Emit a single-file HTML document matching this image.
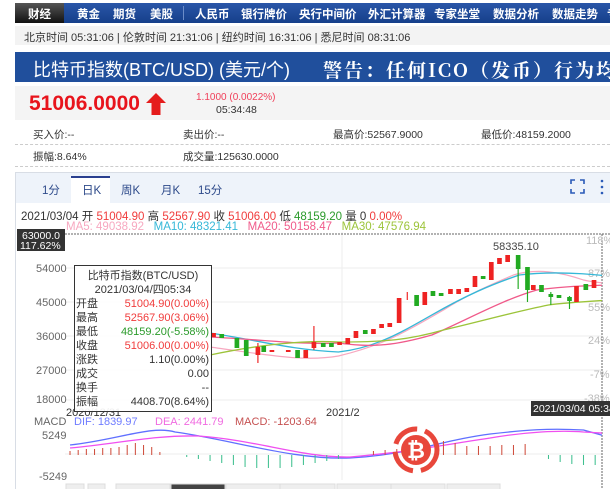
<!DOCTYPE html>
<html><head><meta charset="utf-8"><style>
*{margin:0;padding:0;box-sizing:border-box}
body{width:610px;height:489px;overflow:hidden;background:#fff;font-family:"Liberation Sans","Noto Sans CJK SC",sans-serif;position:relative}
.a{position:absolute;white-space:nowrap}
.nav{left:15px;top:3px;width:595px;height:20px;background:linear-gradient(#2a56a8,#153f8a);color:#fff;font-size:11.5px;font-weight:bold}
.nav span{position:absolute;top:3px}
.t{font-size:11px;color:#333}
</style></head><body>
<div class="a nav">
<div class="a" style="left:0;top:0;width:49px;height:20px;background:linear-gradient(#555,#111)"></div>
<span style="left:13px">财经</span><span style="left:62px">黄金</span><span style="left:98px">期货</span><span style="left:135px">美股</span>
<div class="a" style="left:168px;top:3px;width:1px;height:14px;background:#6b8cc8"></div>
<span style="left:180px">人民币</span><span style="left:226px">银行牌价</span><span style="left:284px">央行中间价</span><span style="left:353px">外汇计算器</span><span style="left:419px">专家坐堂</span><span style="left:478px">数据分析</span><span style="left:537px">数据走势</span><span style="left:592px">专</span>
</div>
<div class="a" style="left:15px;top:26px;width:595px;height:19px;background:#f3f3f3"></div>
<div class="a t" style="left:24px;top:29px;font-size:11px">北京时间 05:31:06 | 伦敦时间 21:31:06 | 纽约时间 16:31:06 | 悉尼时间 08:31:06</div>
<div class="a" style="left:15px;top:52px;width:595px;height:30px;background:#204f9c"></div>
<div class="a" style="left:33px;top:56px;color:#fff;font-size:18px">比特币指数(BTC/USD) (美元/个)</div>
<div class="a" style="left:323px;top:56px;color:#fff;font-size:19px;font-weight:bold;letter-spacing:2px;font-family:'Noto Serif CJK SC',serif">警告：任何ICO（发币）行为均</div>
<div class="a" style="left:15px;top:86px;width:595px;height:34px;background:#f4f4f4"></div>
<div class="a" style="left:29px;top:92px;color:#e8141c;font-size:21px;font-weight:bold">51006.0000</div>
<svg class="a" style="left:145px;top:92px" width="22" height="24"><path d="M11 1 L21 11 L15.5 11 L15.5 23 L6.5 23 L6.5 11 L1 11Z" fill="#e51c1c"/></svg>
<div class="a" style="left:196px;top:92px;color:#f0405a;font-size:10px">1.1000 (0.0022%)</div>
<div class="a t" style="left:216px;top:104px;font-size:10.5px">05:34:48</div>
<div class="a t" style="left:33px;top:127px;font-size:10.5px">买入价:--</div>
<div class="a t" style="left:183px;top:127px;font-size:10.5px">卖出价:--</div>
<div class="a t" style="left:333px;top:127px;font-size:10.5px">最高价:52567.9000</div>
<div class="a t" style="left:481px;top:127px;font-size:10.5px">最低价:48159.2000</div>
<div class="a" style="left:15px;top:144px;width:595px;border-top:1px dashed #ccc"></div>
<div class="a t" style="left:33px;top:149px;font-size:10.5px">振幅:8.64%</div>
<div class="a t" style="left:183px;top:149px;font-size:10.5px">成交量:125630.0000</div>
<div class="a" style="left:15px;top:166px;width:595px;border-top:1px dashed #ccc"></div>
<!-- chart frame -->
<div class="a" style="left:15px;top:172px;width:595px;height:317px;border:1px solid #d8dde5;border-right:none;border-bottom:none"></div>
<div class="a" style="left:16px;top:173px;width:594px;height:30px;background:#eef3fa"></div>
<div class="a" style="left:71px;top:176px;width:39px;height:28px;background:#fff;border-top:2px solid #2a3f8f"></div>
<div class="a" style="left:42px;top:182px;font-size:11.5px;color:#2d4a8a">1分</div>
<div class="a" style="left:82px;top:182px;font-size:11.5px;color:#2d4a8a">日K</div>
<div class="a" style="left:121px;top:182px;font-size:11.5px;color:#2d4a8a">周K</div>
<div class="a" style="left:161px;top:182px;font-size:11.5px;color:#2d4a8a">月K</div>
<div class="a" style="left:198px;top:182px;font-size:11.5px;color:#2d4a8a">15分</div>
<svg class="a" style="left:570px;top:179px" width="40" height="18"><path d="M1 5V1H5M10 1H14V5M14 10V14H10M5 14H1V10" stroke="#2a5ab8" stroke-width="1.6" fill="none"/><circle cx="32" cy="2" r="1.3" fill="#2a5ab8"/><circle cx="32" cy="8" r="1.3" fill="#2a5ab8"/><circle cx="32" cy="14" r="1.3" fill="#2a5ab8"/></svg>
<div class="a" style="left:21px;top:208px;font-size:11.5px;color:#333">2021/03/04 开 <span style="color:#f03c3c">51004.90</span> 高 <span style="color:#f03c3c">52567.90</span> 收 <span style="color:#f03c3c">51006.00</span> 低 <span style="color:#2a9a2a">48159.20</span> 量 0 <span style="color:#f03c3c">0.00%</span></div>
<div class="a" style="left:66px;top:221px;font-size:11.5px"><span style="color:#f7a8c0">MA5: 49038.92</span>&nbsp;&nbsp; <span style="color:#35b8d8">MA10: 48321.41</span>&nbsp;&nbsp; <span style="color:#f05a8a">MA20: 50158.47</span>&nbsp;&nbsp; <span style="color:#9cc43a">MA30: 47576.94</span></div>
<svg class="a" style="left:0;top:0" width="610" height="489">
<defs><clipPath id="cp"><rect x="60" y="230" width="542" height="260"/></clipPath></defs>
<g stroke="#eee" stroke-width="1">
<line x1="65" y1="268" x2="602" y2="268"/><line x1="65" y1="302" x2="602" y2="302"/><line x1="65" y1="336" x2="602" y2="336"/><line x1="65" y1="370" x2="602" y2="370"/><line x1="65" y1="400" x2="602" y2="400"/><line x1="342" y1="232" x2="342" y2="480"/><line x1="65" y1="454" x2="602" y2="454"/>
</g>
<line x1="65" y1="234" x2="610" y2="234" stroke="#666" stroke-dasharray="2,1"/>
<line x1="602" y1="234" x2="602" y2="489" stroke="#666" stroke-dasharray="2,1"/>
<rect x="17" y="229" width="48" height="22" fill="#333"/>
<text x="22" y="239" fill="#fff" font-size="10.5">63000.0</text><text x="20" y="249" fill="#fff" font-size="10.5">117.62%</text>
<g font-size="11" fill="#666">
<text x="36" y="272">54000</text><text x="36" y="306">45000</text><text x="36" y="340">36000</text><text x="36" y="374">27000</text><text x="36" y="403">18000</text>
<text x="34" y="425">MACD</text><text x="42" y="439">5249</text><text x="39" y="480">-5249</text>
<text x="326" y="416" fill="#333">2021/2</text>
</g>
<g font-size="11" fill="#bbb"><text x="586" y="244">118%</text><text x="588" y="277">87%</text><text x="588" y="311">55%</text><text x="588" y="344">24%</text><text x="590" y="378">-7%</text><text x="584" y="402">-38%</text></g>
<text x="493" y="250" font-size="11" fill="#444">58335.10</text>
<g clip-path="url(#cp)"><g transform="scale(1.167,1)">
<path d="M180 347 C230 355 260 362 290 356 C330 345 350 330 380 310 C400 295 420 285 440 275 C460 268 480 272 500 280 C530 288 570 280 600 290" stroke="#f7a8c0" fill="none" stroke-width="1.2"/>
<path d="M180 333 C220 340 250 350 290 352 C320 348 340 335 370 315 C400 295 420 285 445 275 C480 270 520 275 545 280 C570 285 590 290 600 290" stroke="#35b8d8" fill="none" stroke-width="1.3"/>
<path d="M180 337 C230 340 260 345 290 343 C320 348 340 345 370 335 C400 320 430 300 460 290 C490 285 530 284 600 285" stroke="#f05a8a" fill="none" stroke-width="1.3"/>
<path d="M180 355 C220 345 260 340 290 342 C330 342 350 340 380 330 C410 322 440 312 470 305 C500 300 560 300 600 290" stroke="#9cc43a" fill="none" stroke-width="1.3"/>
<rect x="181" y="333" width="4" height="4" fill="#e22"/><rect x="188" y="334" width="4" height="4" fill="#2a2"/><rect x="201" y="338" width="4" height="10" fill="#2a2"/><rect x="209" y="340" width="4" height="16" fill="#2a2"/><line x1="221" y1="343" x2="221" y2="363" stroke="#e22"/><rect x="219" y="347" width="4" height="8" fill="#e22"/><rect x="224" y="346" width="4" height="6" fill="#2a2"/><rect x="231" y="350" width="4" height="2" fill="#e22"/><rect x="245" y="350" width="4" height="2" fill="#e22"/><rect x="253" y="350" width="4" height="8" fill="#2a2"/><rect x="260" y="350" width="4" height="8" fill="#e22"/><line x1="269" y1="326" x2="269" y2="350" stroke="#e22"/><rect x="267" y="342" width="4" height="6" fill="#e22"/><rect x="275" y="343" width="4" height="4" fill="#2a2"/><rect x="282" y="343" width="4" height="4" fill="#2a2"/><rect x="289" y="342" width="4" height="3" fill="#e22"/><rect x="296" y="338" width="4" height="6" fill="#e22"/><rect x="303" y="331" width="4" height="7" fill="#e22"/><rect x="311" y="330" width="4" height="4" fill="#2a2"/><rect x="318" y="329" width="4" height="5" fill="#e22"/><rect x="325" y="324" width="4" height="4" fill="#e22"/><rect x="332" y="323" width="4" height="4" fill="#e22"/><rect x="340" y="298" width="4" height="25" fill="#e22"/><line x1="349" y1="292" x2="349" y2="300" stroke="#e22"/><rect x="355" y="295" width="4" height="11" fill="#2a2"/><rect x="362" y="292" width="4" height="13" fill="#e22"/><rect x="369" y="291" width="4" height="5" fill="#2a2"/><rect x="376" y="293" width="4" height="3" fill="#2a2"/><rect x="384" y="289" width="4" height="5" fill="#e22"/><rect x="391" y="289" width="4" height="5" fill="#e22"/><rect x="398" y="288" width="4" height="4" fill="#e22"/><rect x="405" y="276" width="4" height="11" fill="#e22"/><rect x="412" y="276" width="4" height="3" fill="#2a2"/><rect x="419" y="262" width="4" height="18" fill="#e22"/><rect x="426" y="258" width="4" height="6" fill="#e22"/><rect x="433" y="255" width="4" height="7" fill="#e22"/><line x1="444" y1="255" x2="444" y2="289" stroke="#2a2"/><rect x="442" y="255" width="4" height="14" fill="#2a2"/><line x1="452" y1="267" x2="452" y2="302" stroke="#2a2"/><rect x="450" y="267" width="4" height="23" fill="#2a2"/><rect x="455" y="285" width="4" height="5" fill="#e22"/><rect x="462" y="285" width="4" height="7" fill="#2a2"/><line x1="472" y1="292" x2="472" y2="305" stroke="#2a2"/><rect x="470" y="294" width="4" height="3" fill="#2a2"/><rect x="477" y="295" width="4" height="3" fill="#2a2"/><line x1="488" y1="296" x2="488" y2="309" stroke="#2a2"/><rect x="486" y="297" width="4" height="4" fill="#2a2"/><rect x="492" y="286" width="4" height="16" fill="#e22"/><rect x="500" y="284" width="4" height="6" fill="#2a2"/><rect x="507" y="280" width="4" height="8" fill="#e22"/>
<path d="M60 445 C100 440 130 425 150 432 C200 440 250 460 300 458 C350 455 380 440 420 434 C450 430 470 428 500 430 C530 440 560 450 600 452" stroke="#6070ff" fill="none" stroke-width="1.3"/>
<path d="M60 448 C100 444 130 435 170 436 C220 440 260 458 300 457 C350 452 380 445 420 438 C450 432 480 430 500 432 C540 434 570 440 600 446" stroke="#f050f0" fill="none" stroke-width="1.3"/>
<g stroke="#d05040" stroke-width="0.9"><path d="M60 455V451M67 455V450M74 455V449M81 455V449M88 455V448M95 455V448M102 455V447M109 455V445M116 455V443M123 455V445M130 455V447M137 455V452M320 455V451M330 455V450M340 455V449M380 455V441M390 455V443M400 455V446M410 455V446M420 455V446M430 455V445M440 455V445M450 455V444"/></g>
<g stroke="#40c090" stroke-width="0.9"><path d="M160 455V457M170 455V459M180 455V461M190 455V463M200 455V465M210 455V467M220 455V468M230 455V468M240 455V468M250 455V467M260 455V465M270 455V463M280 455V461M290 455V459M470 455V459M480 455V462M490 455V464M500 455V465M510 455V465M520 455V463"/></g>
</g></g>
<rect x="531" y="401" width="79" height="15" fill="#333"/><text x="533" y="412" fill="#fff" font-size="10.5">2021/03/04 05:34</text>
<text x="66" y="416" font-size="11" fill="#333">2020/12/31</text>
<g font-size="11"><text x="74" y="425" fill="#6f7cff">DIF: 1839.97</text><text x="155" y="425" fill="#f06ae0">DEA: 2441.79</text><text x="235" y="425" fill="#c55050">MACD: -1203.64</text></g>
<!-- bitcoin logo -->
<circle cx="416" cy="450" r="21" fill="none" stroke="#e8473b" stroke-width="5" stroke-dasharray="28,8"/>
<circle cx="416" cy="450" r="15" fill="#e8473b"/>
<text x="416" y="458" font-size="22" font-weight="bold" fill="#fff" text-anchor="middle">₿</text>
<!-- tooltip -->
<rect x="74.5" y="265.5" width="137" height="146" fill="#fff" fill-opacity="0.92" stroke="#333"/>
<g font-size="11" fill="#333">
<text x="143" y="279" text-anchor="middle">比特币指数(BTC/USD)</text><text x="143" y="293" text-anchor="middle">2021/03/04/四05:34</text>
<text x="76" y="307">开盘</text><text x="76" y="321">最高</text><text x="76" y="335">最低</text><text x="76" y="349">收盘</text><text x="76" y="363">涨跌</text><text x="76" y="377">成交</text><text x="76" y="391">换手</text><text x="76" y="405">振幅</text>
<g text-anchor="end"><text x="209" y="307" fill="#f03c3c">51004.90(0.00%)</text><text x="209" y="321" fill="#f03c3c">52567.90(3.06%)</text><text x="209" y="335" fill="#2a9a2a">48159.20(-5.58%)</text><text x="209" y="349" fill="#f03c3c">51006.00(0.00%)</text><text x="209" y="363">1.10(0.00%)</text><text x="209" y="377">0.00</text><text x="209" y="391">--</text><text x="209" y="405">4408.70(8.64%)</text></g>
</g>
<g fill="#eee" stroke="#ddd"><rect x="66" y="484" width="18" height="6"/><rect x="88" y="484" width="17" height="6"/><rect x="116" y="484" width="54" height="6"/><rect x="171" y="484" width="54" height="6" fill="#444"/><rect x="226" y="484" width="54" height="6"/><rect x="280" y="484" width="55" height="6"/><rect x="337" y="484" width="54" height="6"/><rect x="391" y="484" width="54" height="6"/><rect x="447" y="484" width="53" height="6"/></g>
</svg>
</body></html>
